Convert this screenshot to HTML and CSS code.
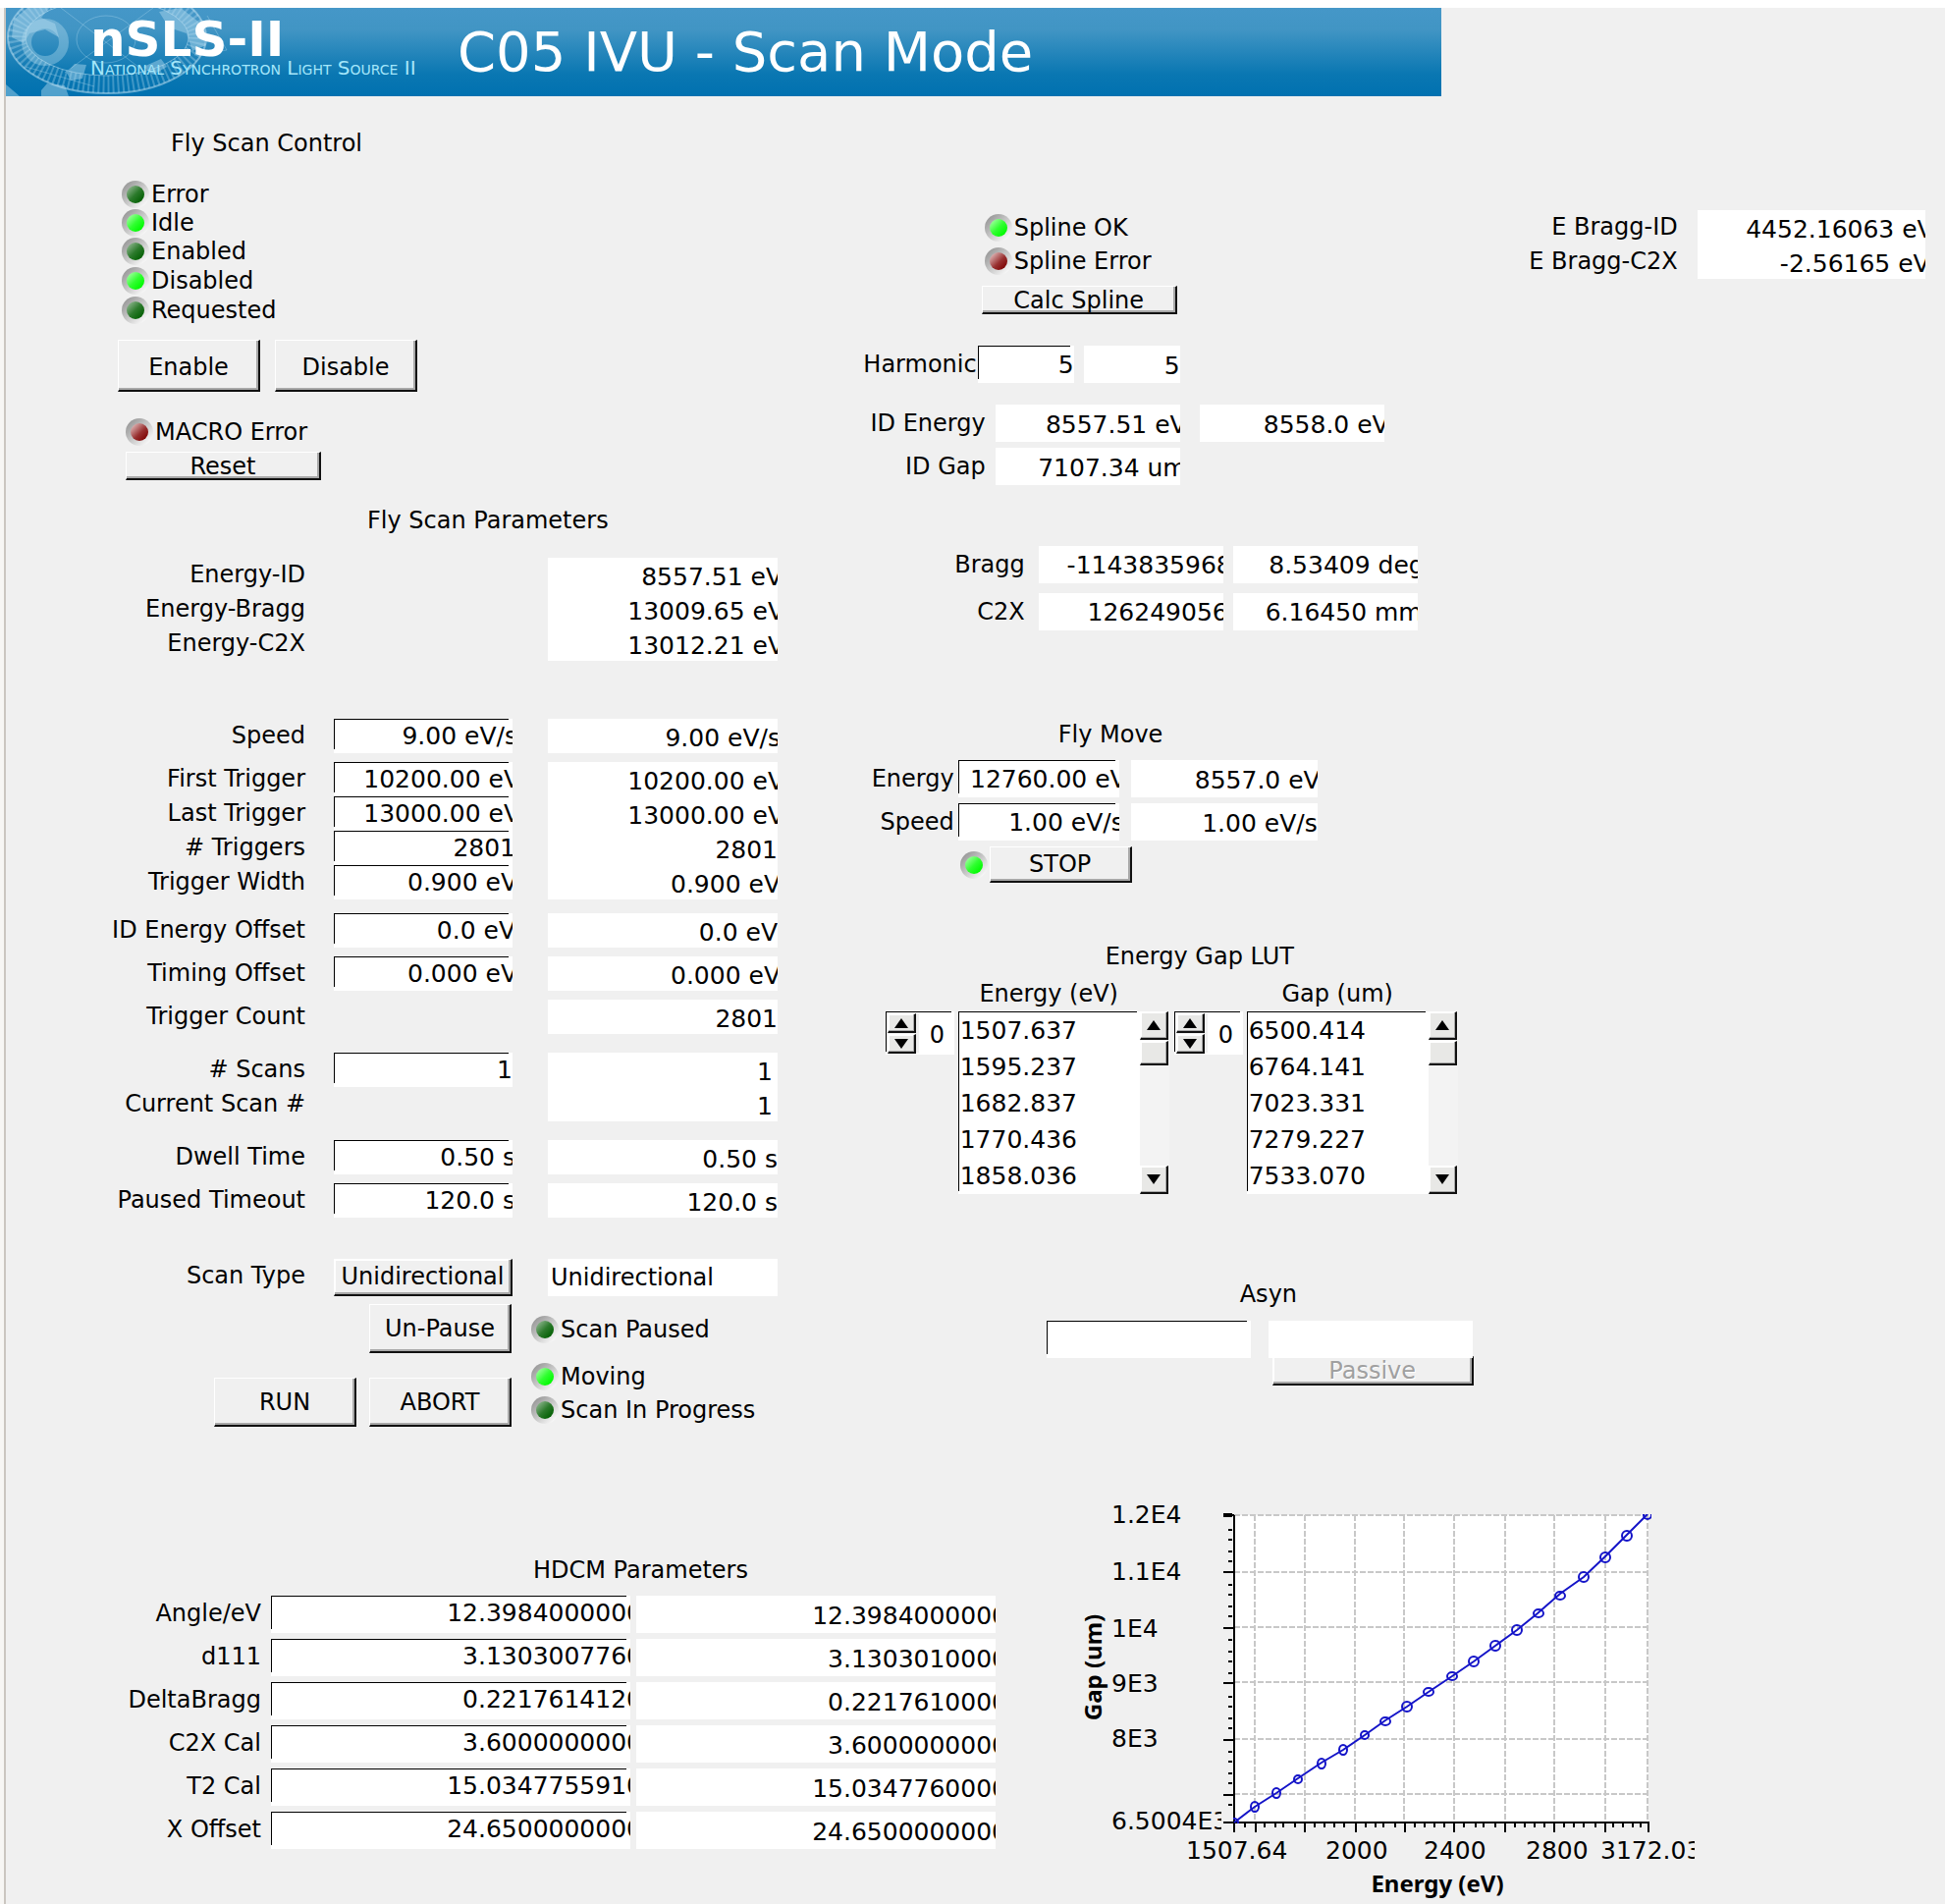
FILE: index.html
```html
<!DOCTYPE html>
<html lang="en">
<head>
<meta charset="utf-8">
<title>C05 IVU - Scan Mode</title>
<link rel="stylesheet" href="styles.css">
</head>
<body>
<div class="screen">
  <header class="banner">
    <svg class="banner-art" viewBox="0 0 240 90" width="240" height="90" aria-hidden="true">
      <g fill="none" stroke="#c4e4f4">
        <ellipse cx="103" cy="30" rx="92" ry="48" stroke-width="18" stroke-opacity=".3" stroke-dasharray="2 3"/>
        <ellipse cx="103" cy="30" rx="101" ry="57" stroke-width="2" stroke-opacity=".5"/>
        <ellipse cx="103" cy="30" rx="83" ry="39" stroke-width="1" stroke-opacity=".5"/>
        <ellipse cx="102" cy="32" rx="30" ry="24" stroke-opacity=".3"/>
        <ellipse cx="40" cy="35" rx="19" ry="19" stroke-width="10" stroke-opacity=".35"/>
        <path d="M56 0L140 64M150 0L60 66M205 8L225 43L192 48M20 60L90 80" stroke-opacity=".3"/>
      </g>
      <g fill="#b4dcf0" fill-opacity=".45">
        <path d="M8 12L22 0H44L36 10L50 16L54 30L40 22L24 26L18 36L6 30Z"/>
        <path d="M156 4L178 0L196 14L204 38L190 44L184 26L166 20Z"/>
        <path d="M62 66L70 57L82 58L78 72L66 74Z"/>
        <path d="M36 84L42 77L60 79L64 90H36ZM0 78L14 90H0Z"/>
        <path d="M140 60L158 52L164 60L150 68Z"/>
      </g>
    </svg>
    <div class="brand">
      <span class="brand-name">nSLS-II</span>
      <span class="brand-sub">National Synchrotron Light Source II</span>
    </div>
    <h1>C05 IVU - Scan Mode</h1>
  </header>

  <main>
    <div class="panels">
      <div class="scan">
        <section class="control">
          <h2>Fly Scan Control</h2>
          <ul class="states">
            <li><i class="led green"></i>Error</li>
            <li><i class="led green lit"></i>Idle</li>
            <li><i class="led green"></i>Enabled</li>
            <li><i class="led green lit"></i>Disabled</li>
            <li><i class="led green"></i>Requested</li>
          </ul>
          <div class="pair">
            <button class="btn tall">Enable</button>
            <button class="btn tall">Disable</button>
          </div>
          <div class="macro">
            <p class="state"><i class="led red"></i>MACRO Error</p>
            <button class="btn thin">Reset</button>
          </div>
        </section>

        <section class="params">
          <h2>Fly Scan Parameters</h2>
          <div class="group">
            <span class="label">Energy-ID</span><output class="value"><span class="over-5">8557.51 eV</span></output>
            <span class="label">Energy-Bragg</span><output class="value"><span class="over-7">13009.65 eV</span></output>
            <span class="label">Energy-C2X</span><output class="value"><span class="over-7">13012.21 eV</span></output>
          </div>
          <div class="group far">
            <label class="label" for="speed">Speed</label><span class="edit"><input class="over-5" id="speed" value="9.00 eV/s"></span><output class="value"><span class="over-3">9.00 eV/s</span></output>
          </div>
          <div class="group near">
            <label class="label" for="first">First Trigger</label><span class="edit"><input class="over-7" id="first" value="10200.00 eV"></span><output class="value"><span class="over-7">10200.00 eV</span></output>
            <label class="label" for="last">Last Trigger</label><span class="edit"><input class="over-7" id="last" value="13000.00 eV"></span><output class="value"><span class="over-7">13000.00 eV</span></output>
            <label class="label" for="ntrig">#&nbsp;Triggers</label><span class="edit"><input class="over-3" id="ntrig" value="2801"></span><output class="value"><span>2801</span></output>
            <label class="label" for="width">Trigger Width</label><span class="edit"><input class="over-5" id="width" value="0.900 eV"></span><output class="value"><span class="over-3">0.900 eV</span></output>
          </div>
          <div class="group mid">
            <label class="label" for="idoff">ID Energy Offset</label><span class="edit"><input class="over-3" id="idoff" value="0.0 eV"></span><output class="value"><span>0.0 eV</span></output>
          </div>
          <div class="group near">
            <label class="label" for="timing">Timing Offset</label><span class="edit"><input class="over-5" id="timing" value="0.000 eV"></span><output class="value"><span class="over-3">0.000 eV</span></output>
          </div>
          <div class="group near">
            <span class="label">Trigger Count</span><output class="value"><span>2801</span></output>
          </div>
          <div class="group wide">
            <label class="label" for="scans"># Scans</label><span class="edit"><input id="scans" value="1"></span><output class="value"><span class="inset">1</span></output>
            <span class="label">Current Scan #</span><output class="value"><span class="inset">1</span></output>
          </div>
          <div class="group wide">
            <label class="label" for="dwell">Dwell Time</label><span class="edit"><input class="over-3" id="dwell" value="0.50 s"></span><output class="value"><span>0.50 s</span></output>
          </div>
          <div class="group near">
            <label class="label" for="paused">Paused Timeout</label><span class="edit"><input class="over-3" id="paused" value="120.0 s"></span><output class="value"><span>120.0 s</span></output>
          </div>
          <div class="group type">
            <label class="label" for="type">Scan Type</label><select class="btn menu" id="type"><option>Unidirectional</option></select><output class="value left"><span>Unidirectional</span></output>
          </div>
        </section>

        <section class="actions">
          <div class="buttons">
            <button class="btn mid-tall">Un-Pause</button>
            <div class="pair">
              <button class="btn mid-tall">RUN</button>
              <button class="btn mid-tall">ABORT</button>
            </div>
          </div>
          <div class="lights">
            <p class="state"><i class="led green"></i>Scan Paused</p>
            <p class="state"><i class="led green lit"></i>Moving</p>
            <p class="state"><i class="led green"></i>Scan In Progress</p>
          </div>
        </section>
      </div>

      <div class="device">
        <section class="spline">
          <p class="state"><i class="led green lit"></i>Spline OK</p>
          <p class="state"><i class="led red"></i>Spline Error</p>
          <button class="btn thin">Calc Spline</button>
        </section>

        <section class="undulator">
          <div class="line harmonic">
            <label class="label" for="harm">Harmonic</label><span class="edit"><input id="harm" value="5"></span><output class="value"><span>5</span></output>
          </div>
          <div class="line id">
            <span class="label">ID Energy</span><output class="value"><span class="over-7">8557.51 eV</span></output><output class="value"><span class="over-5">8558.0 eV</span></output>
          </div>
          <div class="line id">
            <span class="label">ID Gap</span><output class="value"><span class="over-7">7107.34 um</span></output>
          </div>
          <div class="line axis">
            <span class="label">Bragg</span><output class="value"><span class="over-9">-1143835968</span></output><output class="value"><span class="over-7">8.53409 deg</span></output>
          </div>
          <div class="line axis">
            <span class="label">C2X</span><output class="value"><span class="over-5">126249056</span></output><output class="value"><span class="over-5">6.16450 mm</span></output>
          </div>
        </section>

        <section class="move">
          <h2>Fly Move</h2>
          <div class="line fly">
            <label class="label" for="menergy">Energy</label><span class="edit"><input class="over-7" id="menergy" value="12760.00 eV"></span><output class="value"><span class="over-3">8557.0 eV</span></output>
          </div>
          <div class="line fly">
            <label class="label" for="mspeed">Speed</label><span class="edit"><input class="over-5" id="mspeed" value="1.00 eV/s"></span><output class="value"><span>1.00 eV/s</span></output>
          </div>
          <div class="stop"><i class="led green lit"></i><button class="btn">STOP</button></div>
        </section>

        <section class="lut">
          <h2>Energy Gap LUT</h2>
          <div class="tables">
            <div class="array">
              <h3>Energy (eV)</h3>
              <div class="spin">
                <div class="steps">
                  <button class="key" aria-label="Next energy index"><svg viewBox="0 0 14 10" width="14" height="10"><path d="M7 0L14 10H0Z"/></svg></button>
                  <button class="key" aria-label="Previous energy index"><svg viewBox="0 0 14 10" width="14" height="10"><path d="M7 10L14 0H0Z"/></svg></button>
                </div>
                <input value="0" aria-label="Energy index">
              </div>
              <ol><li>1507.637</li><li>1595.237</li><li>1682.837</li><li>1770.436</li><li>1858.036</li></ol>
              <div class="scroll">
                <button class="key" aria-label="Scroll energies up"><svg viewBox="0 0 14 10" width="14" height="10"><path d="M7 0L14 10H0Z"/></svg></button>
                <div class="key thumb"></div>
                <button class="key" aria-label="Scroll energies down"><svg viewBox="0 0 14 10" width="14" height="10"><path d="M7 10L14 0H0Z"/></svg></button>
              </div>
            </div>
            <div class="array">
              <h3>Gap (um)</h3>
              <div class="spin">
                <div class="steps">
                  <button class="key" aria-label="Next gap index"><svg viewBox="0 0 14 10" width="14" height="10"><path d="M7 0L14 10H0Z"/></svg></button>
                  <button class="key" aria-label="Previous gap index"><svg viewBox="0 0 14 10" width="14" height="10"><path d="M7 10L14 0H0Z"/></svg></button>
                </div>
                <input value="0" aria-label="Gap index">
              </div>
              <ol><li>6500.414</li><li>6764.141</li><li>7023.331</li><li>7279.227</li><li>7533.070</li></ol>
              <div class="scroll">
                <button class="key" aria-label="Scroll gaps up"><svg viewBox="0 0 14 10" width="14" height="10"><path d="M7 0L14 10H0Z"/></svg></button>
                <div class="key thumb"></div>
                <button class="key" aria-label="Scroll gaps down"><svg viewBox="0 0 14 10" width="14" height="10"><path d="M7 10L14 0H0Z"/></svg></button>
              </div>
            </div>
          </div>
        </section>

        <section class="asyn">
          <h2><label for="asyn">Asyn</label></h2>
          <div class="line">
            <span class="edit"><input id="asyn" value=""></span><output class="value"></output>
          </div>
          <select class="btn menu passive" aria-label="Asyn scan" disabled><option>Passive</option></select>
        </section>
      </div>

      <section class="bragg">
        <div class="line">
          <span class="label">E Bragg-ID</span><output class="value"><span class="over-9">4452.16063 eV</span></output>
        </div>
        <div class="line">
          <span class="label">E Bragg-C2X</span><output class="value"><span class="over-5">-2.56165 eV</span></output>
        </div>
      </section>
    </div>

    <div class="lower">
      <section class="hdcm">
        <h2>HDCM Parameters</h2>
        <div class="line"><label class="label" for="angle">Angle/eV</label><span class="edit"><input class="over-12" id="angle" value="12.3984000000"></span><output class="value"><span class="over-12">12.3984000000</span></output></div>
        <div class="line"><label class="label" for="d111">d111</label><span class="edit"><input class="over-12" id="d111" value="3.1303007760"></span><output class="value"><span class="over-12">3.1303010000</span></output></div>
        <div class="line"><label class="label" for="delta">DeltaBragg</label><span class="edit"><input class="over-12" id="delta" value="0.2217614120"></span><output class="value"><span class="over-12">0.2217610000</span></output></div>
        <div class="line"><label class="label" for="c2x">C2X Cal</label><span class="edit"><input class="over-12" id="c2x" value="3.6000000000"></span><output class="value"><span class="over-12">3.6000000000</span></output></div>
        <div class="line"><label class="label" for="t2">T2 Cal</label><span class="edit"><input class="over-12" id="t2" value="15.0347755910"></span><output class="value"><span class="over-12">15.0347760000</span></output></div>
        <div class="line"><label class="label" for="xoff">X Offset</label><span class="edit"><input class="over-12" id="xoff" value="24.6500000000"></span><output class="value"><span class="over-12">24.6500000000</span></output></div>
      </section>

      <svg class="plot" viewBox="0 0 626 409" width="626" height="409" role="img" aria-label="Gap against energy">
        <defs>
          <clipPath id="ylabels"><rect x="0" y="0" width="144" height="409"/></clipPath>
          <clipPath id="area"><rect x="156" y="11" width="426" height="315"/></clipPath>
        </defs>
        <rect x="157" y="12" width="422" height="313" fill="#fff"/>
        <g stroke="#c8c8c8" stroke-width="2" stroke-dasharray="6 2">
          <path d="M157 12H579M157 70H579M157 126H579M157 182H579M157 240H579M157 296H579"/>
          <path d="M178 12V325M229 12V325M280 12V325M330 12V325M381 12V325M433 12V325M483 12V325M535 12V325M578 12V325"/>
        </g>
        <g stroke="#000" stroke-width="2" fill="none">
          <path d="M157 12V326M156 325H580"/>
          <path d="M146 12H157M146 70H157M146 127H157M146 183H157M146 241H157M146 297H157M146 325H157"/>
          <path d="M151 27H155M151 37H155M151 49H155M151 59H155M151 83H155M151 93H155M151 105H155M151 115H155M151 139H155M151 151H155M151 161H155M151 173H155M151 197H155M151 207H155M151 219H155M151 229H155M151 253H155M151 263H155M151 275H155M151 285H155M151 307H155"/>
          <path d="M157 325V335M179 325V335M229 325V335M281 325V335M331 325V335M381 325V335M433 325V335M483 325V335M535 325V335M579 325V335"/>
          <path d="M168 325V330M188 325V330M199 325V330M207 325V330M219 325V330M239 325V330M249 325V330M259 325V330M269 325V330M291 325V330M301 325V330M309 325V330M321 325V330M341 325V330M351 325V330M361 325V330M371 325V330M391 325V330M403 325V330M411 325V330M423 325V330M443 325V330M453 325V330M463 325V330M473 325V330M493 325V330M503 325V330M513 325V330M525 325V330M543 325V330M553 325V330M563 325V330M571 325V330"/>
        </g>
        <path d="M146 12H155" stroke="#000" stroke-width="4"/>
        <g fill="none" stroke="#1414c8" stroke-width="2" clip-path="url(#area)">
          <polyline points="157,325 178,309 200,295 222,280 246,264 268,251 290,236 311,221 333,207 355,192 379,176 401,161 423,145 445,129 466,112 489,92 513,75 535,54 557,32 578,11"/>
          <circle cx="157" cy="325" r="4"/><ellipse cx="178" cy="309" rx="4" ry="5"/><ellipse cx="200" cy="295" rx="4" ry="5"/><circle cx="222" cy="281" r="4"/><ellipse cx="246" cy="265" rx="4" ry="5"/><ellipse cx="268" cy="251" rx="4" ry="5"/><circle cx="290" cy="236" r="4"/><ellipse cx="311" cy="222" rx="5" ry="4"/><circle cx="333" cy="207" r="5"/><ellipse cx="355" cy="192" rx="5" ry="4"/><ellipse cx="379" cy="176" rx="5" ry="4"/><circle cx="401" cy="161" r="5"/><circle cx="423" cy="145" r="5"/><circle cx="445" cy="129" r="5"/><ellipse cx="467" cy="112" rx="5" ry="4"/><ellipse cx="489" cy="94" rx="5" ry="4"/><circle cx="513" cy="75" r="5"/><circle cx="535" cy="55" r="5"/><circle cx="557" cy="33" r="5"/><circle cx="578" cy="12" r="4"/>
        </g>
        <g class="ticks" clip-path="url(#ylabels)">
          <text x="32" y="20">1.2E4</text>
          <text x="32" y="78">1.1E4</text>
          <text x="32" y="136">1E4</text>
          <text x="32" y="192">9E3</text>
          <text x="32" y="248">8E3</text>
          <text x="32" y="332">6.5004E3</text>
        </g>
        <g class="ticks">
          <text x="108" y="362">1507.64</text>
          <text x="250" y="362">2000</text>
          <text x="350" y="362">2400</text>
          <text x="454" y="362">2800</text>
          <text x="530" y="362">3172.03</text>
        </g>
        <text class="title" x="364" y="396" text-anchor="middle">Energy (eV)</text>
        <text class="title" transform="translate(22 167) rotate(-90)" text-anchor="middle">Gap (um)</text>
      </svg>
    </div>
  </main>
</div>
</body>
</html>
```
FILE: styles.css
```css
* { box-sizing: border-box; }

html { background: #f7f6f4; }

body {
  margin: 0;
  border-top: 8px solid #fff;
  font: 24px/28px "DejaVu Sans", sans-serif;
  color: #000;
}

.screen {
  margin-left: 4px;
  border-left: 2px solid #cac6c0;
  background: #f0f0f0;
  min-height: calc(100vh - 8px);
  overflow: hidden;
}

h2, h3, p, ul, ol { margin: 0; padding: 0; font-size: 24px; font-weight: 400; }
ul, ol { list-style: none; }
input, select, button { font: inherit; color: inherit; }

/* banner */
.banner {
  position: relative;
  display: flex;
  width: 74%;
  height: 90px;
  background: linear-gradient(#4597c8, #4195c4 25%, #0a77b2 75%, #0071b0);
  color: #fff;
}
.banner-art { position: absolute; left: 0; top: 0; }
.brand {
  position: relative;
  width: 460px;
  padding: 12px 0 0 86px;
  display: flex;
  flex-direction: column;
  white-space: nowrap;
}
.brand-name { font-size: 50px; line-height: 40px; font-weight: 700; }
.brand-sub { font-size: 20px; line-height: 18px; font-variant: small-caps; color: #a4e6fa; }
.banner h1 { margin: 0; font-size: 56px; line-height: 90px; font-weight: 400; white-space: nowrap; }

/* page grid */
.panels { display: grid; grid-template-columns: 865fr 629fr 481fr; }
.lower { display: grid; grid-template-columns: 1094fr 881fr; margin-top: 76px; }

/* shared widgets */
.led {
  flex: none;
  width: 28px;
  height: 28px;
  margin-right: 2px;
  padding: 5px;
  border-radius: 50%;
  background: linear-gradient(135deg, #9c9c9c 15%, #c8c8c8 50%, #f6f6f6 85%);
}
.led::before { content: ""; display: block; height: 18px; border-radius: 50%; }
.green::before { background: linear-gradient(135deg, #8cb48c 10%, #2c7a2c 50%, #046004 85%); }
.green.lit::before { background: linear-gradient(135deg, #a0ffa0 10%, #30ff30 50%, #00fa00 85%); }
.red::before { background: linear-gradient(135deg, #e0b8b8 10%, #983030 55%, #7c0000 90%); }

.state, .states li { display: flex; align-items: center; height: 30px; white-space: nowrap; }

.btn {
  width: 145px;
  padding: 0;
  border: solid;
  border-width: 1px 2px 2px 1px;
  border-color: #fff #111 #111 #fff;
  border-radius: 0;
  background: #f0f0f0;
  box-shadow: inset -2px -2px #a8a8a8;
  text-align: center;
}
.tall { height: 53px; padding-top: 3px; }
.mid-tall { height: 50px; }
.thin { width: 199px; height: 29px; line-height: 28px; overflow: hidden; }
.menu { appearance: none; text-align-last: center; box-shadow: inset -2px -2px #a8a8a8, inset 1px 1px #fff; }
.pair { display: flex; gap: 15px; }

.label { text-align: right; white-space: nowrap; }
.value {
  display: flex;
  justify-content: flex-end;
  padding-top: 2px;
  background: #fff;
  overflow: hidden;
  font-size: 25px;
  white-space: nowrap;
}
.value.left { justify-content: flex-start; padding-left: 3px; font-size: 24px; }
.edit {
  display: block;
  overflow: hidden;
  background:
    linear-gradient(#000, #000) 0 0 / calc(100% - 4px) 1px no-repeat,
    linear-gradient(#000, #000) 0 0 / 1px calc(100% - 4px) no-repeat,
    #fff;
}
.edit input {
  display: block;
  width: 100%;
  height: 100%;
  padding: 0;
  border: 0;
  outline: 0;
  background: none;
  font-size: 25px;
  text-align: right;
}
/* readings wider than their box run past its right edge */
.value .over-3 { margin-right: -3px; }
.value .over-5 { margin-right: -5px; }
.value .over-7 { margin-right: -7px; }
.value .over-9 { margin-right: -9px; }
.value .over-12 { margin-right: -12px; }
.value .inset { margin-right: 5px; }
.edit .over-3 { width: calc(100% + 3px); }
.edit .over-5 { width: calc(100% + 5px); }
.edit .over-7 { width: calc(100% + 8px); }
.edit .over-12 { width: calc(100% + 12px); }

/* fly scan control */
.control { padding: 34px 0 0 118px; }
.control h2 { padding-left: 50px; margin-bottom: 23px; }
.states { display: grid; grid-template-rows: 30px 28px 30px 30px 30px; margin-bottom: 15px; }
.states li { height: auto; }
.control .pair { margin: 0 0 26px -4px; }
.macro { padding-left: 4px; }
.macro .btn { display: block; margin-top: 5px; }

/* fly scan parameters */
.params { padding-top: 27px; }
.params h2 { padding-left: 368px; margin-bottom: 24px; }
.group {
  display: grid;
  grid-template-columns: 334px 218px 234px;
  grid-auto-rows: 35px;
  line-height: 35px;
}
.group .label { grid-column: 1; padding-right: 29px; }
.group .edit, .group .btn { grid-column: 2; width: 182px; }
.group .value { grid-column: 3; }
.group .value, .line .value { line-height: inherit; }
.far { margin-top: 59px; }
.near { margin-top: 9px; }
.mid { margin-top: 14px; }
.wide { margin-top: 19px; }
.type { margin-top: 42px; grid-auto-rows: 38px; }

.actions { display: flex; gap: 20px; padding: 8px 0 0 212px; }
.buttons { display: flex; flex-direction: column; align-items: flex-end; gap: 25px; }
.buttons .pair { gap: 13px; }
.lights { padding-top: 11px; }
.lights .state { margin-bottom: 4px; }
.lights .state:first-child { margin-bottom: 18px; }

/* device column */
.line { display: grid; height: 38px; line-height: 38px; }
.spline { padding: 119px 0 32px 133px; }
.spline .state { margin-bottom: 4px; }
.spline .btn { margin: 10px 0 0 -3px; display: block; }

.harmonic { grid-template-columns: 125px 98px 98px; margin-bottom: 22px; }
.harmonic .edit { margin-left: 1px; margin-right: -1px; }
.harmonic .value { margin-left: 11px; margin-right: -11px; }
.id { grid-template-columns: 134px 188px 188px; margin-bottom: 6px; }
.id .value { margin-left: 10px; margin-right: -10px; }
.id .value + .value { margin-left: 30px; margin-right: -30px; }
.axis { grid-template-columns: 174px 188px 188px; margin-top: 62px; }
.axis .value { margin-left: 14px; margin-right: -14px; padding-top: 1px; }
.axis .value + .value { margin-left: 24px; margin-right: -24px; }
.axis + .axis { margin-top: 10px; }

.move { padding-top: 92px; }
.move h2 { padding-left: 208px; margin-bottom: 12px; }
.fly { grid-template-columns: 102px 164px 190px; margin-bottom: 6px; }
.fly .edit { margin-left: 4px; margin-right: -4px; }
.fly .value { margin-left: 16px; margin-right: -16px; }
.stop { display: flex; align-items: center; padding-left: 108px; }
.stop .btn { height: 37px; }

.lut { padding-top: 61px; }
.lut h2 { padding-left: 256px; margin-bottom: 10px; }
.tables { display: flex; gap: 5px; padding-left: 32px; }
.array {
  display: grid;
  grid-template: 32px 186px / 74px 185px 30px;
}
.array h3 { grid-column: 2 / 4; padding-right: 30px; text-align: center; white-space: nowrap; }
.spin, .array ol {
  background:
    linear-gradient(#000, #000) 0 0 / calc(100% - 3px) 1px no-repeat,
    linear-gradient(#000, #000) 0 0 / 1px calc(100% - 3px) no-repeat,
    #fff;
}
.spin { display: flex; width: 70px; height: 44px; padding: 2px 0 2px 2px; grid-column: 1; }
.steps { display: flex; flex-direction: column; gap: 1px; width: 32px; background: #f0f0f0; }
.steps .key { width: 29px; height: 20px; }
.spin input { width: 34px; padding: 3px 0 0 11px; border: 0; outline: 0; background: none; }
.key {
  display: flex;
  flex: none;
  align-items: center;
  justify-content: center;
  width: 29px;
  height: 29px;
  padding: 0;
  border: solid;
  border-width: 1px 2px 2px 1px;
  border-color: #fff #111 #111 #fff;
  border-radius: 0;
  background: #e8e8e6;
  box-shadow: inset -1px -1px #a8a8a8, inset 1px 1px #fff;
}
.key svg { display: block; }
.array ol { padding: 5px 0 0 2px; font-size: 25px; line-height: 29px; display: grid; grid-auto-rows: 37px; }
.scroll { display: flex; flex-direction: column; background: #f3f3f3; }
.scroll .thumb { height: 25px; margin: 1px 0 auto; }

.asyn { padding: 88px 0 0 196px; }
.asyn h2 { padding-left: 197px; margin-bottom: 13px; }
.asyn .line { grid-template-columns: 208px 208px; gap: 18px; }
.asyn .passive { display: block; width: 205px; height: 30px; margin: -2px 0 0 230px; color: #a0a0a0; opacity: 1; text-shadow: 1px 1px #fff; }

/* Bragg difference readouts */
.bragg { padding-top: 116px; }
.bragg .line { grid-template-columns: 208px 232px; gap: 20px; height: 35px; line-height: 35px; }

/* HDCM */
.hdcm { padding-top: 54px; }
.hdcm h2 { padding-left: 537px; margin-bottom: 12px; }
.hdcm .line { grid-template-columns: 260px 366px 366px; column-gap: 6px; margin-bottom: 6px; line-height: 36px; }
.hdcm .edit { margin-left: 4px; margin-right: -4px; }
.hdcm .edit input { height: 36px; }
.hdcm .value { margin-left: 4px; margin-right: -4px; padding-top: 3px; }

/* plot */
.plot { display: block; overflow: hidden; }
.ticks { font-size: 25px; }
.title { font: 700 24px "Noto Sans", "Open Sans", sans-serif; }
```
